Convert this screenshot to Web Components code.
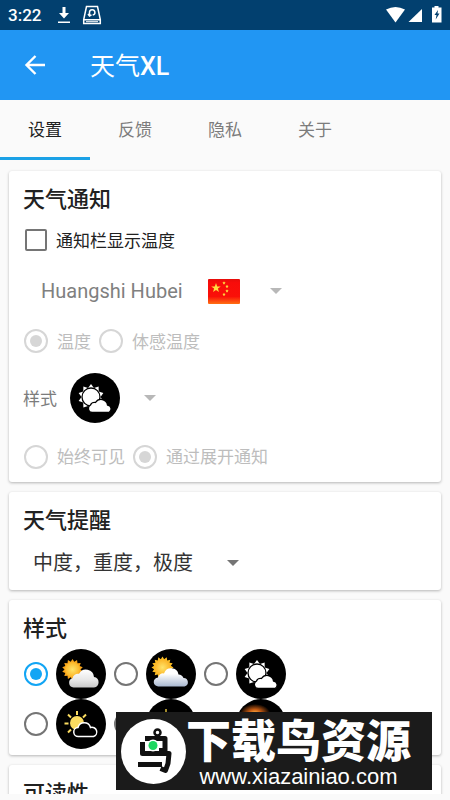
<!DOCTYPE html>
<html lang="zh-CN">
<head>
<meta charset="utf-8">
<meta name="viewport" content="width=device-width, initial-scale=1">
<title>天气XL</title>
<style>
  html, body{
      height: 100%;
  }
  body{
      margin: 0;
      display: flex;
      flex-direction: column;
      background: #fafafa;
      color: #212121;
      font-family: Roboto, "Noto Sans CJK SC", sans-serif;
      font-size: 17px;
      overflow: hidden;
  }
  main{
      flex: 1;
      min-height: 0;
      overflow: hidden;
      display: flex;
      flex-direction: column;
      gap: 10px;
      padding: 11px 9px 0;
      margin-bottom: 6px;
  }
</style>
</head>
<body>
<status-bar time="3:22"></status-bar>
<app-bar><span>天气</span><b>XL</b></app-bar>
<tab-bar tabs="设置,反馈,隐私,关于"></tab-bar>
<main>
  <settings-card heading="天气通知">
    <check-row>通知栏显示温度</check-row>
    <drop-down label="位置" value="Huangshi Hubei" disabled style="--row: 52px; --left: 18px; --right: 99px"></drop-down>
    <radio-group name="temperature" options="温度,体感温度" selected="0" disabled style="--row: 48px"></radio-group>
    <drop-down label="样式" caption="样式" disabled style="--row: 66px; --left: 0px; --right: 86px">
      <weather-icon kind="outline"></weather-icon>
    </drop-down>
    <radio-group name="visibility" options="始终可见,通过展开通知" selected="1" disabled style="--row: 51px"></radio-group>
  </settings-card>
  <settings-card heading="天气提醒">
    <drop-down label="天气提醒" value="中度，重度，极度" style="--row: 54px; --left: 10px; --right: 46px"></drop-down>
  </settings-card>
  <settings-card heading="样式">
    <radio-group name="style" icons="soft,bright,outline,line,night,glow" selected="0"></radio-group>
  </settings-card>
  <settings-card heading="可读性"></settings-card>
</main>
<site-banner url="www.xiazainiao.com">下载鸟资源</site-banner>

<script>
function attach(element, html) {
  const template = document.createElement('template');
  template.innerHTML = html;
  element.attachShadow({mode: 'open'}).appendChild(template.content.cloneNode(true));
}

// points of a star, used for the sun rays and for the flag
function star(cx, cy, outer, inner, count) {
  const points = [];
  for (let i = 0; i < count * 2; i++) {
    const r = i % 2 ? inner : outer;
    const a = Math.PI * i / count - Math.PI / 2;
    points.push((cx + r * Math.cos(a)).toFixed(2) + ',' + (cy + r * Math.sin(a)).toFixed(2));
  }
  return points.join(' ');
}

class StatusBar extends HTMLElement {
  constructor() {
    super();
    attach(this, `
      <style>
        :host{
            display: flex;
            flex: none;
            align-items: center;
            height: 30px;
            padding: 0 8px;
            background: #02406f;
            color: #fff;
            font-size: 17px;
            font-weight: 500;
        }
        .time{
            margin-right: 15px;
        }
        .left{
            margin-right: 10px;
        }
        .space{
            flex: 1;
        }
      </style>
      <span class="time"></span>
      <svg class="left" width="16" height="18" viewBox="0 0 16 18" fill="#fff"><path d="M6.500 1h3v6h3.500l-5 5.500-5-5.500h3.500zM2 15.500h12v1.500h-12z"/></svg>
      <svg width="20" height="20" viewBox="0 0 20 20" fill="none" stroke="#fff" stroke-width="1.500">
        <path d="M4.500 1.500h11l2.800 13v4h-16.600v-4zM2 14.800h16"/><path d="M7.500 10.800V7.500a2.700 2.700 0 1 1 3.200 2.600M6 9l1.500 2 2-1.200"/><path d="M4 16.700h12" stroke-width="1"/>
      </svg>
      <span class="space"></span>
      <svg width="56" height="18" viewBox="0 0 56 18" fill="#fff">
        <path d="M0 3.500Q9.500-1.500 19 3.500L9.500 16.500z"/>
        <path d="M36 3v13H22.500z"/>
        <path fill-rule="evenodd" d="M48.500 0h4v1.500H55.500V16.500H46V1.500h2.500zM52 4l-3.500 5h2l-.8 4.500 3.800-6h-2z"/>
      </svg>
    `);
  }

  connectedCallback() {
    this.shadowRoot.querySelector('.time').textContent = this.getAttribute('time');
  }
}

class AppBar extends HTMLElement {
  constructor() {
    super();
    attach(this, `
      <style>
        :host{
            display: flex;
            flex: none;
            align-items: center;
            gap: 42px;
            height: 70px;
            padding: 0 22px;
            background: #2196f3;
            color: #fff;
        }
        button{
            display: flex;
            padding: 0;
            border: 0;
            background: none;
            color: inherit;
        }
        h1{
            margin: 0;
            padding-bottom: 2px;
            font-size: 25px;
            font-weight: 400;
        }
        ::slotted(b){
            font-weight: 500;
        }
      </style>
      <button type="button" aria-label="返回">
        <svg width="26" height="26" viewBox="0 0 26 26" fill="none" stroke="currentColor" stroke-width="2.400"><path d="M23 13H5M13.500 4L4.500 13l9 9"/></svg>
      </button>
      <h1><slot></slot></h1>
    `);
  }
}

class TabBar extends HTMLElement {
  constructor() {
    super();
    attach(this, `
      <style>
        :host{
            display: flex;
            flex: none;
            height: 60px;
        }
        button{
            width: 20%;
            padding: 0;
            border: 0;
            border-bottom: 3px solid transparent;
            background: none;
            color: #7c7c7c;
            font: inherit;
        }
        button[aria-selected=true]{
            border-color: #1ba1e6;
            color: #212121;
        }
      </style>
    `);
  }

  connectedCallback() {
    this.setAttribute('role', 'tablist');
    this.getAttribute('tabs').split(',').forEach((name, i) => {
      const tab = document.createElement('button');
      tab.type = 'button';
      tab.setAttribute('role', 'tab');
      tab.setAttribute('aria-selected', i === 0);
      tab.textContent = name;
      tab.addEventListener('click', () => {
        this.shadowRoot.querySelectorAll('button').forEach(b => b.setAttribute('aria-selected', b === tab));
      });
      this.shadowRoot.appendChild(tab);
    });
  }
}

class SettingsCard extends HTMLElement {
  constructor() {
    super();
    attach(this, `
      <style>
        :host{
            display: flex;
            flex: none;
            flex-direction: column;
            padding: 14px 14px 0;
            border-radius: 3px;
            background: #fff;
            box-shadow: 0 1px 3px rgba(0, 0, 0, .28);
        }
        h2{
            margin: 0;
            font-size: 22px;
            line-height: 30px;
            font-weight: 500;
        }
      </style>
      <h2></h2>
      <slot></slot>
    `);
  }

  connectedCallback() {
    this.shadowRoot.querySelector('h2').textContent = this.getAttribute('heading');
  }
}

class CheckRow extends HTMLElement {
  constructor() {
    super();
    attach(this, `
      <style>
        :host{
            display: flex;
            height: 50px;
        }
        label{
            display: flex;
            align-items: center;
            gap: 9px;
        }
        input{
            appearance: none;
            width: 22px;
            height: 22px;
            margin: 0 0 0 2px;
            border: 2px solid #757575;
            border-radius: 2px;
        }
        input:checked{
            background: #03a9f4;
        }
        span{
            padding-bottom: 2px;
        }
      </style>
      <label><input type="checkbox"><span><slot></slot></span></label>
    `);
  }
}

class DropDown extends HTMLElement {
  constructor() {
    super();
    // the select spans the grid, its picture and arrow lie in the same cell
    attach(this, `
      <style>
        :host{
            display: flex;
            align-items: center;
            gap: 13px;
            height: var(--row);
        }
        .caption{
            padding-bottom: 2px;
            color: #7c7c7c;
        }
        .caption:empty{
            display: none;
        }
        .field{
            display: grid;
            align-items: center;
        }
        .field > *{
            grid-area: 1 / 1;
        }
        select{
            appearance: none;
            box-sizing: border-box;
            height: 50px;
            padding: 0 var(--right) 0 var(--left);
            border: 0;
            background: none;
            color: #333;
            font: inherit;
            font-size: 20px;
            opacity: 1;
        }
        select:disabled{
            color: #808080;
        }
        .end{
            display: flex;
            align-items: center;
            gap: 30px;
            justify-self: end;
            pointer-events: none;
        }
        .arrow{
            fill: #757575;
        }
        :host([disabled]) .arrow{
            fill: #b8b8b8;
        }
        :host([caption]) .end{
            gap: 24px;
        }
      </style>
      <span class="caption"></span>
      <span class="field">
        <select><option></option></select>
        <span class="end"><slot></slot><svg class="arrow" width="12" height="6" viewBox="0 0 12 6"><path d="M0 0h12l-6 6z"/></svg></span>
      </span>
    `);
  }

  connectedCallback() {
    const select = this.shadowRoot.querySelector('select');
    select.setAttribute('aria-label', this.getAttribute('label'));
    select.disabled = this.hasAttribute('disabled');
    this.shadowRoot.querySelector('option').textContent = this.getAttribute('value') || '';
    this.shadowRoot.querySelector('.caption').textContent = this.getAttribute('caption') || '';
  }
}

class RadioGroup extends HTMLElement {
  constructor() {
    super();
    attach(this, `
      <style>
        :host{
            display: flex;
            align-items: center;
            gap: 8px;
            height: var(--row);
            padding-left: 1px;
        }
        :host([icons]){
            display: grid;
            grid-template-columns: repeat(3, max-content);
            gap: 0 8px;
            height: auto;
            padding: 5px 0 6px 1px;
        }
        :host([disabled]){
            color: #bdbdbd;
        }
        label{
            display: flex;
            align-items: center;
            gap: 9px;
        }
        :host([icons]) label{
            gap: 8px;
        }
        span{
            padding-bottom: 2px;
        }
        input{
            appearance: none;
            display: grid;
            place-items: center;
            box-sizing: border-box;
            width: 24px;
            height: 24px;
            margin: 0;
            border: 2px solid #757575;
            border-radius: 50%;
        }
        input:checked{
            border-color: #12a5f4;
        }
        input:checked::before{
            content: "";
            width: 12px;
            height: 12px;
            border-radius: 50%;
            background: #12a5f4;
        }
        input:disabled{
            border-color: #d6d6d6;
        }
        input:disabled::before{
            background: #d6d6d6;
        }
      </style>
    `);
  }

  connectedCallback() {
    const icons = this.getAttribute('icons');
    const items = (icons || this.getAttribute('options')).split(',');
    items.forEach((item, i) => {
      const label = document.createElement('label');
      const input = document.createElement('input');
      input.type = 'radio';
      input.name = this.getAttribute('name');
      input.value = item;
      input.checked = i === Number(this.getAttribute('selected'));
      input.disabled = this.hasAttribute('disabled');
      label.appendChild(input);
      if (icons) {
        const icon = document.createElement('weather-icon');
        icon.setAttribute('kind', item);
        input.setAttribute('aria-label', item);
        label.appendChild(icon);
      } else {
        const text = document.createElement('span');
        text.textContent = item;
        label.appendChild(text);
      }
      this.shadowRoot.appendChild(label);
    });
  }
}

const CLOUD = 'M17.500 38.500a4.700 4.700 0 0 1-1-9.200 5.500 5.500 0 0 1 6.500-4.500 8 8 0 0 1 15 3.200 5.300 5.300 0 0 1 0 10.500z';

const drawings = {
  soft: `
    <polygon points="${star(16.5, 20.5, 10.5, 8, 14)}" fill="#f9a51a"/>
    <circle cx="16.500" cy="20.500" r="7.500" fill="url(#sun)"/>
    <path d="${CLOUD}" fill="url(#cloud)"/>`,
  bright: `
    <polygon points="${star(16.5, 18.5, 11, 8.5, 16)}" fill="#fbbd24"/>
    <circle cx="16.500" cy="18.500" r="8" fill="url(#sun)"/>
    <path d="M12.500 37.500a4.500 4.500 0 0 1-.5-9 5 5 0 0 1 6-4 7.500 7.500 0 0 1 14.500 1 6 6 0 0 1 5 3.500 4.300 4.300 0 0 1 1 8.500z" fill="url(#blue)"/>`,
  outline: `
    <polygon points="${star(21, 24, 13, 9.5, 10)}" fill="#fff"/>
    <circle cx="21" cy="24" r="9" fill="#fff" stroke="#000" stroke-width="1.300"/>
    <path d="M22 39.500a4 4 0 0 1-1.500-7.500 4 4 0 0 1 5-2.500 6.500 6.500 0 0 1 12 2.500 4 4 0 0 1 1.500 7.500z" fill="#fff" stroke="#000" stroke-width="1.300"/>`,
  line: `
    <circle cx="21" cy="24" r="7" fill="#fbdc60"/>
    <g stroke="#fbdc60" stroke-width="2"><path d="M21 12v4M8.500 24.500h4M12 15.500l3 3M30 15.500l-3 3M12 33.500l3-3"/></g>
    <path d="M22.500 37.500a4.500 4.500 0 0 1-.5-9 6.500 6.500 0 0 1 12.500 0 4.500 4.500 0 0 1 3 9z" fill="#000" stroke="#fff" stroke-width="1.500"/>`,
  night: `
    <path d="M20 10v3" stroke="#d8b93b" stroke-width="1.500"/>
    <circle cx="20" cy="23" r="7" fill="#d8b93b"/>`,
  glow: `
    <ellipse cx="19" cy="14" rx="15" ry="9" fill="url(#glow)"/>
    <path d="${CLOUD}" fill="url(#cloud)"/>`
};

class WeatherIcon extends HTMLElement {
  connectedCallback() {
    if (this.shadowRoot) return;
    attach(this, `
      <style>
        :host{
            display: block;
            width: 50px;
            height: 50px;
        }
        svg{
            display: block;
        }
      </style>
      <svg width="50" height="50" viewBox="0 0 50 50" aria-hidden="true">
        <defs>
          <radialGradient id="sun"><stop offset="0" stop-color="#ffe46b"/><stop offset="1" stop-color="#fcb526"/></radialGradient>
          <radialGradient id="glow"><stop offset="0" stop-color="#ffb347"/><stop offset=".4" stop-color="#c45a12"/><stop offset="1" stop-color="#000"/></radialGradient>
          <linearGradient id="cloud" x2="0" y2="1"><stop offset="0" stop-color="#fff"/><stop offset=".6" stop-color="#e6e6e6"/><stop offset="1" stop-color="#c9c9c9"/></linearGradient>
          <linearGradient id="blue" x2="0" y2="1"><stop offset=".3" stop-color="#fff"/><stop offset="1" stop-color="#a9b8d0"/></linearGradient>
        </defs>
        <circle cx="25" cy="25" r="25"/>
        ${drawings[this.getAttribute('kind')]}
      </svg>
    `);
  }
}

class CountryFlag extends HTMLElement {
  constructor() {
    super();
    attach(this, `
      <style>
        :host{
            display: block;
        }
        svg{
            display: block;
        }
      </style>
      <svg width="32" height="25" viewBox="0 0 32 25" aria-hidden="true">
        <defs><linearGradient id="red" x2="0" y2="1"><stop offset="0" stop-color="#e60d0a"/><stop offset=".15" stop-color="#f80c0a"/><stop offset=".7" stop-color="#fa1008"/><stop offset="1" stop-color="#ff7012"/></linearGradient></defs>
        <rect width="32" height="25" rx="1" fill="url(#red)"/>
        <g fill="#ffe040">
          <polygon points="${star(8, 9, 5, 2, 5)}"/>
          <polygon points="${star(16, 4, 1.7, .8, 5)}"/>
          <polygon points="${star(19, 7.5, 1.7, .8, 5)}"/>
          <polygon points="${star(19, 12, 1.7, .8, 5)}"/>
          <polygon points="${star(16, 15.5, 1.7, .8, 5)}"/>
        </g>
      </svg>
    `);
  }
}

class SiteBanner extends HTMLElement {
  constructor() {
    super();
    attach(this, `
      <style>
        :host{
            position: fixed;
            right: 18px;
            bottom: 10px;
            display: flex;
            align-items: center;
            box-sizing: border-box;
            height: 78px;
            padding: 0 21px 0 5px;
            background: #1b1b1b;
            color: #fff;
        }
        .text{
            display: flex;
            flex-direction: column;
            align-items: center;
            padding-top: 6px;
        }
        .name{
            font-size: 45px;
            font-weight: 900;
            font-style: oblique 8deg;
            line-height: 46px;
        }
        a{
            color: inherit;
            font-family: "Liberation Sans", Arial, sans-serif;
            font-size: 22px;
            line-height: 22px;
            text-decoration: none;
        }
      </style>
      <svg width="65" height="65" viewBox="0 0 65 65" aria-hidden="true">
        <circle cx="32.500" cy="32.500" r="32.500" fill="#fff"/>
        <g fill="none" stroke="#111" stroke-width="5" stroke-linejoin="round">
          <path d="M24 19.500h20v12h-6"/>
          <path d="M21.500 23v11.500h26.500l-1 10-2.500 7-5-2"/>
          <path d="M17 45.500h24"/>
          <circle cx="36.500" cy="13.500" r="3" stroke-width="2.500"/>
        </g>
        <circle cx="32" cy="26.500" r="6" fill="#fff"/>
        <circle cx="32" cy="26.500" r="4.500" fill="#1ed760"/>
      </svg>
      <span class="text"><span class="name"><slot></slot></span><a href="#"></a></span>
    `);
  }

  connectedCallback() {
    this.shadowRoot.querySelector('a').textContent = this.getAttribute('url');
  }
}

window.customElements.define('status-bar', StatusBar);
window.customElements.define('app-bar', AppBar);
window.customElements.define('tab-bar', TabBar);
window.customElements.define('settings-card', SettingsCard);
window.customElements.define('check-row', CheckRow);
window.customElements.define('weather-icon', WeatherIcon);
window.customElements.define('country-flag', CountryFlag);
window.customElements.define('drop-down', DropDown);
window.customElements.define('radio-group', RadioGroup);
window.customElements.define('site-banner', SiteBanner);

document.querySelector('drop-down').appendChild(document.createElement('country-flag'));
</script>
</body>
</html>
